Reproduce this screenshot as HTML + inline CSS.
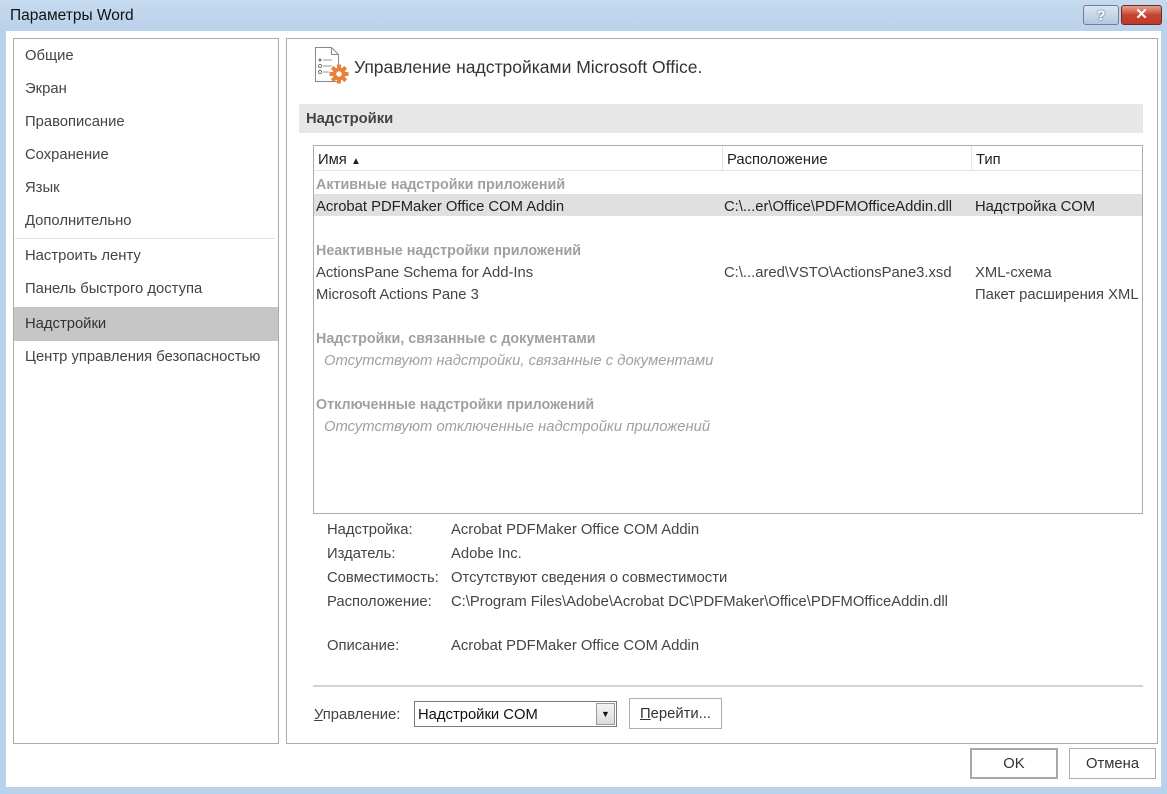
<!DOCTYPE html>
<html><head><meta charset="utf-8"><style>
*{margin:0;padding:0;box-sizing:border-box}
body{width:1167px;height:794px;background:#b9d1ea;font-family:"Liberation Sans",sans-serif;font-size:14.8px;line-height:20px;color:#444;position:relative;overflow:hidden}
.a{position:absolute;white-space:nowrap}
#title{left:0;top:0;width:1167px;height:31px;background:linear-gradient(#c6daee,#b9d1ea)}
#client{left:6px;top:31px;width:1155px;height:756px;background:#fff}
#left{left:13px;top:38px;width:266px;height:706px;border:1px solid #ababab;background:#fff}
#right{left:286px;top:38px;width:872px;height:706px;border:1px solid #ababab;background:#fff}
.nav{left:11px;color:#444}
.g{color:#a0a0a0;font-weight:bold;font-size:14.3px}
.i{color:#a0a0a0;font-style:italic}
.btn{border:1px solid #adadad;background:#fff;text-align:center;color:#333}
</style></head><body>
<div class="a" id="title"></div>
<div class="a" style="left:10px;top:6px;font-size:15.5px;color:#111">Параметры Word</div>
<div class="a" style="left:1083px;top:5px;width:36px;height:20px;border:1px solid #6c7f96;border-radius:3px;background:linear-gradient(#dbe6f2,#b5c7dc);color:#fff;font-weight:bold;text-align:center;line-height:18px;font-size:14px;text-shadow:0 0 2px #34506d">?</div>
<div class="a" style="left:1121px;top:5px;width:41px;height:20px;border:1px solid #6d2a22;border-radius:3px;background:linear-gradient(#e8a193,#c4452f 50%,#c0392a);color:#fff;font-weight:bold;text-align:center;line-height:18px;font-size:15px">✕</div>
<div class="a" id="client"></div>
<div class="a" id="left">
 <div class="a nav" style="top:7px">Общие</div>
 <div class="a nav" style="top:40px">Экран</div>
 <div class="a nav" style="top:73px">Правописание</div>
 <div class="a nav" style="top:106px">Сохранение</div>
 <div class="a nav" style="top:139px">Язык</div>
 <div class="a nav" style="top:172px">Дополнительно</div>
 <div class="a" style="left:1px;top:199px;width:260px;height:1px;background:#e1e1e1"></div>
 <div class="a nav" style="top:207px">Настроить ленту</div>
 <div class="a nav" style="top:240px">Панель быстрого доступа</div>
 <div class="a" style="left:0;top:268px;width:264px;height:34px;background:#c6c6c6"></div>
 <div class="a nav" style="top:275px;color:#333">Надстройки</div>
 <div class="a nav" style="top:308px">Центр управления безопасностью</div>
</div>
<div class="a" id="right"></div>
<svg class="a" style="left:314px;top:46px" width="36" height="40" viewBox="0 0 36 40">
<path d="M1.5 1.5h16l7 7v27h-23z" fill="#fff" stroke="#8a8a8a"/><path d="M17.5 1.5v7h7" fill="none" stroke="#8a8a8a"/>
<circle cx="6" cy="14" r="1.5" fill="#777"/><path d="M9 14h9" stroke="#999"/>
<circle cx="6" cy="20" r="1.6" fill="none" stroke="#777"/><path d="M9 20h9" stroke="#999"/>
<circle cx="6" cy="26" r="1.6" fill="none" stroke="#777"/><path d="M9 26h6" stroke="#999"/>
<g transform="translate(25,28)" fill="#e8813a"><circle r="6.5"/><rect x="-2" y="-9.5" width="4" height="19"/><rect x="-9.5" y="-2" width="19" height="4"/><rect x="-2" y="-9.5" width="4" height="19" transform="rotate(45)"/><rect x="-2" y="-9.5" width="4" height="19" transform="rotate(-45)"/><circle r="2.7" fill="#fff"/></g>
</svg>
<div class="a" style="left:354px;top:56px;font-size:17.5px;line-height:22px;color:#333">Управление надстройками Microsoft Office.</div>
<div class="a" style="left:299px;top:104px;width:844px;height:29px;background:#e7e7e7"></div>
<div class="a" style="left:306px;top:109px;font-weight:bold;color:#444">Надстройки</div>
<div class="a" style="left:313px;top:145px;width:830px;height:369px;border:1px solid #ababab"></div>
<div class="a" style="left:314px;top:170px;width:828px;height:1px;background:#e5e5e5"></div>
<div class="a" style="left:722px;top:146px;width:1px;height:24px;background:#e5e5e5"></div>
<div class="a" style="left:971px;top:146px;width:1px;height:24px;background:#e5e5e5"></div>
<div class="a" style="left:318px;top:150px;color:#222">Имя <span style="font-size:10px">▲</span></div>
<div class="a" style="left:727px;top:150px;color:#222">Расположение</div>
<div class="a" style="left:976px;top:150px;color:#222">Тип</div>
<div class="a g" style="left:316px;top:175px">Активные надстройки приложений</div>
<div class="a" style="left:314px;top:194px;width:828px;height:22px;background:#e0e0e0"></div>
<div class="a" style="left:316px;top:197px;color:#222">Acrobat PDFMaker Office COM Addin</div>
<div class="a" style="left:724px;top:197px;color:#222">C:\...er\Office\PDFMOfficeAddin.dll</div>
<div class="a" style="left:975px;top:197px;color:#222">Надстройка COM</div>
<div class="a g" style="left:316px;top:241px">Неактивные надстройки приложений</div>
<div class="a" style="left:316px;top:263px">ActionsPane Schema for Add-Ins</div>
<div class="a" style="left:724px;top:263px">C:\...ared\VSTO\ActionsPane3.xsd</div>
<div class="a" style="left:975px;top:263px">XML-схема</div>
<div class="a" style="left:316px;top:285px">Microsoft Actions Pane 3</div>
<div class="a" style="left:975px;top:285px;width:166px;overflow:hidden">Пакет расширения XML</div>
<div class="a g" style="left:316px;top:329px">Надстройки, связанные с документами</div>
<div class="a i" style="left:324px;top:351px">Отсутствуют надстройки, связанные с документами</div>
<div class="a g" style="left:316px;top:395px">Отключенные надстройки приложений</div>
<div class="a i" style="left:324px;top:417px">Отсутствуют отключенные надстройки приложений</div>
<div class="a" style="left:327px;top:520px">Надстройка:</div><div class="a" style="left:451px;top:520px">Acrobat PDFMaker Office COM Addin</div>
<div class="a" style="left:327px;top:544px">Издатель:</div><div class="a" style="left:451px;top:544px">Adobe Inc.</div>
<div class="a" style="left:327px;top:568px">Совместимость:</div><div class="a" style="left:451px;top:568px">Отсутствуют сведения о совместимости</div>
<div class="a" style="left:327px;top:592px">Расположение:</div><div class="a" style="left:451px;top:592px">C:\Program Files\Adobe\Acrobat DC\PDFMaker\Office\PDFMOfficeAddin.dll</div>
<div class="a" style="left:327px;top:636px">Описание:</div><div class="a" style="left:451px;top:636px">Acrobat PDFMaker Office COM Addin</div>
<div class="a" style="left:313px;top:685px;width:830px;height:2px;background:#d4d4d4"></div>
<div class="a" style="left:314px;top:705px"><u>У</u>правление:</div>
<div class="a" style="left:414px;top:701px;width:203px;height:26px;border:1px solid #7a7a7a;background:#fff"></div>
<div class="a" style="left:418px;top:705px;color:#111">Надстройки COM</div>
<div class="a" style="left:596px;top:703px;width:19px;height:22px;border:1px solid #999;background:linear-gradient(#f4f4f4,#dcdcdc);text-align:center;font-size:9px;line-height:21px;color:#111">▼</div>
<div class="a btn" style="left:629px;top:698px;width:93px;height:31px;line-height:30px"><u>П</u>ерейти...</div>
<div class="a btn" style="left:970px;top:748px;width:88px;height:31px;line-height:29px;border:2px solid #a8a8a8">OK</div>
<div class="a btn" style="left:1069px;top:748px;width:87px;height:31px;line-height:31px">Отмена</div>
</body></html>
